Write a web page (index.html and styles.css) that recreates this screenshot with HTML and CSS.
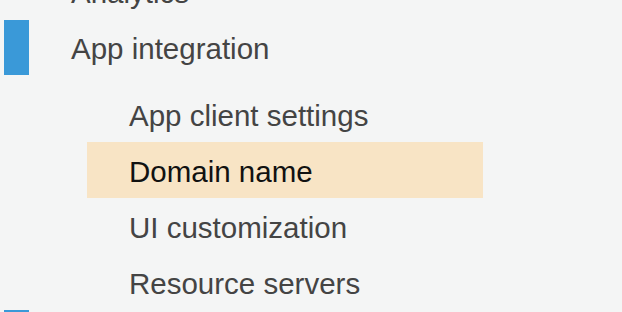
FILE: index.html
```html
<!DOCTYPE html>
<html>
<head>
<meta charset="utf-8">
<link rel="stylesheet" href="styles.css">
</head>
<body>
<nav class="nav">
  <div class="item"><span class="label">Analytics</span></div>
  <div class="item active"><span class="marker"></span><span class="label">App integration</span></div>
  <ul class="sub">
    <li class="sub-item">App client settings</li>
    <li class="sub-item selected">Domain name</li>
    <li class="sub-item">UI customization</li>
    <li class="sub-item">Resource servers</li>
  </ul>
  <div class="item active"><span class="marker"></span></div>
</nav>
</body>
</html>
```

FILE: styles.css
```css
html, body {
  margin: 0;
  padding: 0;
  background: #f4f5f5;
  overflow: hidden;
}
body {
  width: 622px;
  height: 312px;
  font-family: "Liberation Sans", Arial, Helvetica, sans-serif;
  font-size: 29.5px;
  color: #444444;
}
.nav {
  margin-top: -36px;
  display: flex;
  flex-direction: column;
}
.item {
  height: 56px;
  display: flex;
  align-items: center;
  padding-left: 71px;
  position: relative;
}
.label {
  line-height: 56px;
  padding-top: 2px;
}
.marker {
  position: absolute;
  left: 4px;
  top: 0;
  width: 25px;
  height: 55px;
  background: #3a99d8;
}
.sub {
  list-style: none;
  margin: 10px 0 0 87px;
  padding: 0;
  width: 396px;
}
.sub-item {
  height: 56px;
  line-height: 56px;
  padding-left: 42px;
  padding-top: 2px;
  box-sizing: border-box;
}
.sub-item.selected {
  background: #f8e4c5;
  color: #111111;
}
```
